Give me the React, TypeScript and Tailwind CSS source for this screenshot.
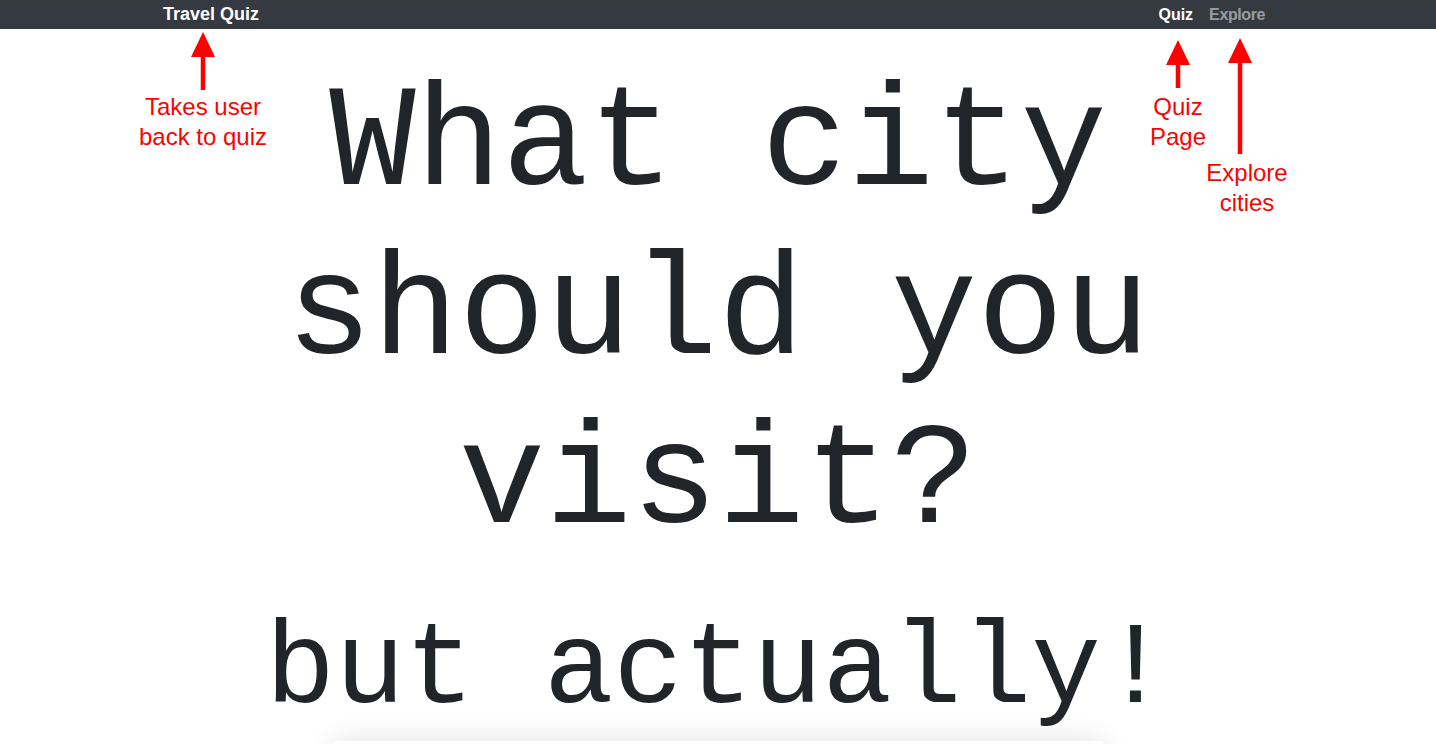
import React from 'react';

// red arrow pointing up at a nav item, with a note under it
const Callout: React.FC<{ left: number; top: number; arrow: number; gap: number; nudge?: number; lines: string[] }> = ({
  left,
  top,
  arrow,
  gap,
  nudge = 0,
  lines,
}) => (
  <div
    className="absolute flex w-[160px] flex-col items-center text-center text-[24px] leading-[30px] text-[#ff0000]"
    style={{ left, top }}
  >
    <svg width={26} height={arrow} viewBox={`0 0 26 ${arrow}`} style={{ marginBottom: gap, marginRight: nudge }}>
      <polygon points="13,0 25,25 1,25" fill="#ff0000" />
      <rect x={10.75} y={22} width={4.5} height={arrow - 22} fill="#ff0000" />
    </svg>
    {lines.map((l) => (
      <div key={l}>{l}</div>
    ))}
  </div>
);

export default function App() {
  return (
    <div className="relative min-h-[744px] overflow-hidden bg-white font-['Liberation_Sans',Arial,sans-serif]">
      {/* Navbar */}
      <nav className="h-[29px] bg-[#343a40]">
        <div className="mx-auto flex h-full w-[1140px] items-center justify-between px-[15px]">
          <a className="text-[18px] font-bold text-white">Travel Quiz</a>
          <div className="flex items-center">
            <a className="px-2 text-[16px] font-bold text-white">Quiz</a>
            <a className="px-2 text-[16px] font-bold tracking-[-0.4px] text-white/50">Explore</a>
          </div>
        </div>
      </nav>

      {/* Hero */}
      <div className="mx-auto w-[1140px] px-[15px] text-center text-[#212529] font-['Courier_New','Liberation_Mono',monospace]">
        <h1 className="mt-[32px] text-[144px] leading-[169px] font-normal">What city should you visit?</h1>
        <h2 className="mt-[34px] text-[116px] leading-[139px] font-normal">but actually!</h2>
        <div className="mx-auto h-[200px] w-[770px] rounded bg-white shadow-[0_0_28px_rgba(0,0,0,0.12)]" />
      </div>

      {/* Annotations */}
      <Callout left={123} top={32} arrow={58} gap={2} lines={['Takes user', 'back to quiz']} />
      <Callout left={1098} top={40} arrow={48} gap={4} lines={['Quiz', 'Page']} />
      <Callout left={1167} top={38} arrow={116} gap={4} nudge={14} lines={['Explore', 'cities']} />
    </div>
  );
}
